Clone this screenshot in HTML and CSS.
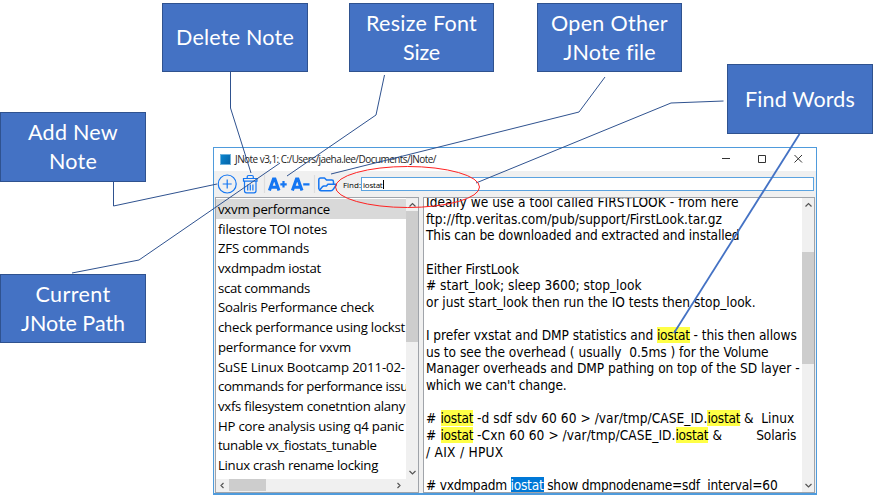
FILE: index.html
```html
<!DOCTYPE html>
<html lang="en">
<head>
<meta charset="utf-8">
<title>JNote guide</title>
<link rel="stylesheet" href="styles.css">
</head>
<body>
<main class="canvas">
  <section class="window">
    <header class="titlebar">
      <span class="appicon"></span>
      <span class="title"><span data-w="201">JNote v3,1: C:/Users/jaeha.lee/Documents/JNote/</span></span>
      <svg class="winbtns" width="90" height="22" viewBox="0 0 90 22" fill="none" stroke="#333" stroke-width="1"><path d="M2 10.500h8M38.500 7.500h7v7h-7zM74.500 7l7.500 7.500M82 7l-7.500 7.500"/></svg>
    </header>
    <div class="toolbar">
      <svg class="tools" width="126" height="26" viewBox="214 171 126 26" fill="none" stroke="#1476f2" stroke-width="1.200">
        <circle cx="227.200" cy="184" r="9"/><path d="M227.200 179.500v9M222.700 184h9"/>
        <path d="M243.500 178.500h13.500v2.700h-13.500zM247.200 178v-1.200q0-1.300 1.300-1.300h3.500q1.300 0 1.300 1.300v1.200M244.500 181.500v9.300q0 2 2 2h7.500q2 0 2-2v-9.300M247.700 184.500v6M250.300 184.500v6M252.900 184.500v6"/>
        <path stroke="#ddd" d="M264.500 175v18M314.500 175v18"/>
        <path stroke-width="3.100" d="M269.400 190.500l4.100-11.500h1.400l4.100 11.500M271.300 187.200h5.700M292.400 190.500l4.100-11.500h1.400l4.100 11.500M294.300 187.200h5.700"/>
        <path stroke-width="2.200" d="M280.300 184.300h6.400M283.500 181.100v6.400M303.200 184.300h6.300"/>
        <path stroke-width="1.500" stroke-linejoin="round" d="M318.800 189.500v-9.700q0-1.800 1.800-1.800h3.900l2 2h5.300q1.700 0 1.700 1.700v2.300M319.500 190.300l2.900-3.600q.6-.7 1.600-.7h2.400l1.500-1.700h7.300q1.500 0 .7 1.200l-2.700 3.900q-.9 1.300-2.200 1.300h-10q-1.500 0-1.500-.4z"/>
      </svg>
      <span class="findlabel"><span data-w="18">Find:</span></span>
      <div class="findbox"><span data-w="19.500">iostat</span><i class="caret"></i></div>
    </div>
    <div class="panes">
      <div class="list">
        <div class="listmain">
          <div class="rows">
            <div class="row selected"><span data-w="112">vxvm performance</span></div>
            <div class="row"><span data-w="109">filestore TOI notes</span></div>
            <div class="row"><span data-w="91">ZFS commands</span></div>
            <div class="row"><span data-w="103">vxdmpadm iostat</span></div>
            <div class="row"><span data-w="92">scat commands</span></div>
            <div class="row"><span data-w="156">Soalris Performance check</span></div>
            <div class="row"><span data-w="187">check performance using lockst</span></div>
            <div class="row"><span data-w="133">performance for vxvm</span></div>
            <div class="row"><span data-w="187">SuSE Linux Bootcamp 2011-02-</span></div>
            <div class="row"><span data-w="190">commands for performance issu</span></div>
            <div class="row"><span data-w="187">vxfs filesystem conetntion alany</span></div>
            <div class="row"><span data-w="186">HP core analysis using q4 panic</span></div>
            <div class="row"><span data-w="158.500">tunable vx_fiostats_tunable</span></div>
            <div class="row"><span data-w="160">Linux crash rename locking</span></div>
          </div>
          <div class="hbar"><svg width="190" height="13" fill="none" stroke="#555" stroke-width="1.200"><path d="M7.500 4L5 6.500 7.500 9M181.500 4l2.500 2.500-2.500 2.500"/></svg><i class="hthumb"></i></div>
        </div>
        <div class="vbar listbar"><svg width="13" height="13" fill="none" stroke="#555" stroke-width="1.200"><path d="M3.500 8.500L6.500 5.500 9.500 8.500"/></svg><i class="thumb"></i><svg class="down" width="13" height="13" fill="none" stroke="#555" stroke-width="1.200"><path d="M3.500 5L6.500 8 9.500 5"/></svg></div>
      </div>
      <div class="note">
        <div class="text">
          <div class="line"><span data-w="312.500">Ideally we use a tool called FIRSTLOOK - from here</span></div>
          <div class="line"><span data-w="296">ftp://ftp.veritas.com/pub/support/FirstLook.tar.gz</span></div>
          <div class="line"><span data-w="313.500">This can be downloaded and extracted and installed</span></div>
          <div class="line"></div>
          <div class="line"><span data-w="93">Either FirstLook</span></div>
          <div class="line"><span data-w="215.500"># start_look; sleep 3600; stop_look</span></div>
          <div class="line"><span data-w="329.500">or just start_look then run the IO tests then stop_look.</span></div>
          <div class="line"></div>
          <div class="line"><span data-w="231">I prefer vxstat and DMP statistics and </span><mark data-w="32.700">iostat</mark><span data-w="107"> - this then allows</span></div>
          <div class="line"><span data-w="342.500">us to see the overhead ( usually  0.5ms ) for the Volume</span></div>
          <div class="line"><span data-w="373.500">Manager overheads and DMP pathing on top of the SD layer -</span></div>
          <div class="line"><span data-w="140.500">which we can't change.</span></div>
          <div class="line"></div>
          <div class="line"><span data-w="14.500"># </span><mark data-w="32.700">iostat</mark><span data-w="234.300"> -d sdf sdv 60 60 &gt; /var/tmp/CASE_ID.</span><mark data-w="32.700">iostat</mark><span data-w="54"> &amp;  Linux</span></div>
          <div class="line"><span data-w="14.500"># </span><mark data-w="32.700">iostat</mark><span data-w="202.300"> -Cxn 60 60 &gt; /var/tmp/CASE_ID.</span><mark data-w="32.700">iostat</mark><span data-w="48"> &amp;        </span><span data-w="40">Solaris</span></div>
          <div class="line"><span data-w="77.500">/ AIX / HPUX</span></div>
          <div class="line"></div>
          <div class="line"><span data-w="84.500"># vxdmpadm </span><mark class="current" data-w="33">iostat</mark><span data-w="234"> show dmpnodename=sdf  interval=60</span></div>
        </div>
        <div class="vbar notebar"><svg width="13" height="13" fill="none" stroke="#555" stroke-width="1.200"><path d="M3.500 8.500L6.500 5.500 9.500 8.500"/></svg><i class="thumb"></i><svg class="down" width="13" height="13" fill="none" stroke="#555" stroke-width="1.200"><path d="M3.500 5L6.500 8 9.500 5"/></svg></div>
      </div>
    </div>
  </section>
  <svg class="lines" width="873" height="495" viewBox="0 0 873 495" fill="none" stroke="#2f528f" stroke-width="1">
    <path d="M230.500 72v36l20.500 65M113.500 182v24L217 184M72 273l67-13L280 163M384.500 75l-8.500 40-89 61M605 77l-26 35L331 174M723.500 101l-52.500 2L476 183"/>
    <ellipse cx="407.500" cy="187" rx="72" ry="20.500" stroke="#f22"/>
    <path stroke="#4472c4" stroke-width="1.800" d="M799.500 134L674 333"/>
  </svg>
  <div class="callout add"><span data-w="90">Add New</span><span data-w="48">Note</span></div>
  <div class="callout delete"><span data-w="118">Delete Note</span></div>
  <div class="callout resize"><span data-w="111">Resize Font</span><span data-w="37">Size</span></div>
  <div class="callout open"><span data-w="117">Open Other</span><span data-w="92">JNote file</span></div>
  <div class="callout find"><span data-w="110">Find Words</span></div>
  <div class="callout path"><span data-w="75">Current</span><span data-w="104">JNote Path</span></div>
</main>
<script src="fit.js"></script>
</body>
</html>
```
FILE: fit.js
```js
// Spread the letters of each run so that it takes up its stated width.
document.querySelectorAll('[data-w]').forEach(function (el) {
  var natural = el.getBoundingClientRect().width;
  var gap = (Number(el.dataset.w) - natural) / el.textContent.length;
  el.style.letterSpacing = gap + 'px';
});
```
FILE: styles.css
```css
* { box-sizing: border-box; }
body { margin: 0; background: #fff; color: #000; overflow: hidden; }
[data-w] { white-space: pre; }
.canvas { position: relative; width: 873px; height: 495px; overflow: hidden; }
.window {
  position: absolute; left: 213px; top: 147px; width: 604px; height: 348px;
  border: 1px solid #4f9bdc; border-bottom-width: 2px; background: #f0f0f0;
  display: flex; flex-direction: column;
}
.titlebar { height: 23px; background: #fff; display: flex; align-items: center; padding-left: 6px; font: 10px "Open Sans", sans-serif; color: #222; flex: none; }
.appicon { width: 11px; height: 11px; background: linear-gradient(120deg, #0b86cf, #0563a8); border: 1px solid #6fb2dd; }
.title { margin-left: 4px; flex: 1; position: relative; top: -1px; }
.winbtns { margin-right: 6px; position: relative; top: -1px; }
.toolbar { height: 26px; display: flex; align-items: center; flex: none; font: 8px "Open Sans", sans-serif; }
.tools { flex: none; }
.findlabel { width: 21px; padding-left: 3px; flex: none; }
.findbox { flex: 1; height: 14px; margin-right: 2px; border: 1px solid #5ba3e0; background: #fff; display: flex; align-items: center; padding-left: 1px; }
.caret { width: 1px; height: 9px; background: #000; }
.panes { display: flex; gap: 4px; height: 296px; padding: 0 1px; }
.list, .note { background: #fff; border: 1px solid #a0a4aa; display: flex; overflow: hidden; }
.list { width: 204px; flex: none; }
.listmain { width: 190px; flex: none; display: flex; flex-direction: column; overflow: hidden; }
.rows { flex: 1; overflow: hidden; padding-top: 1px; }
.row { height: 19.7px; line-height: 20px; padding-left: 2px; font-family: "Open Sans", sans-serif; font-size: 13.2px; overflow: hidden; }
.selected { background: #d9d9d9; }
.hbar { position: relative; height: 13px; background: #f0f0f0; flex: none; }
.hbar svg, .vbar svg { display: block; }
.hthumb { position: absolute; left: 13px; top: 0; width: 37px; height: 12px; background: #cdcdcd; }
.vbar { width: 12px; background: #f0f0f0; display: flex; flex-direction: column; flex: none; }
.down { margin-top: auto; }
.thumb { background: #cdcdcd; }
.listbar .thumb { height: 131px; }
.listbar .down { margin-bottom: 13px; }
.notebar .thumb { height: 112px; margin-top: 41px; }
.note { flex: 1; }
.text { flex: 1; overflow: hidden; padding-left: 2px; margin-top: -4px; font-family: "DejaVu Sans Condensed", "DejaVu Sans", sans-serif; font-stretch: condensed; font-size: 13.6px; }
.line { height: 16.65px; line-height: 16.65px; white-space: pre; }
mark { background: #ffff46; color: #000; }
.current { background: #0078d7; color: #fff; }
.lines { position: absolute; left: 0; top: 0; }
.callout {
  position: absolute; width: 146px; height: 70px; border: 1px solid #2f528f; background: #4472c4; color: #fff;
  display: flex; flex-direction: column; align-items: center; justify-content: center;
  font: 21.5px/29px Lato, sans-serif;
}
.add { left: 0; top: 112px; }
.delete { left: 162px; top: 3px; height: 69px; }
.resize { left: 349px; top: 3px; width: 145px; height: 69px; }
.open { left: 537px; top: 3px; width: 145px; height: 69px; }
.find { left: 727px; top: 64px; }
.path { left: 0; top: 274px; height: 69px; }
```
